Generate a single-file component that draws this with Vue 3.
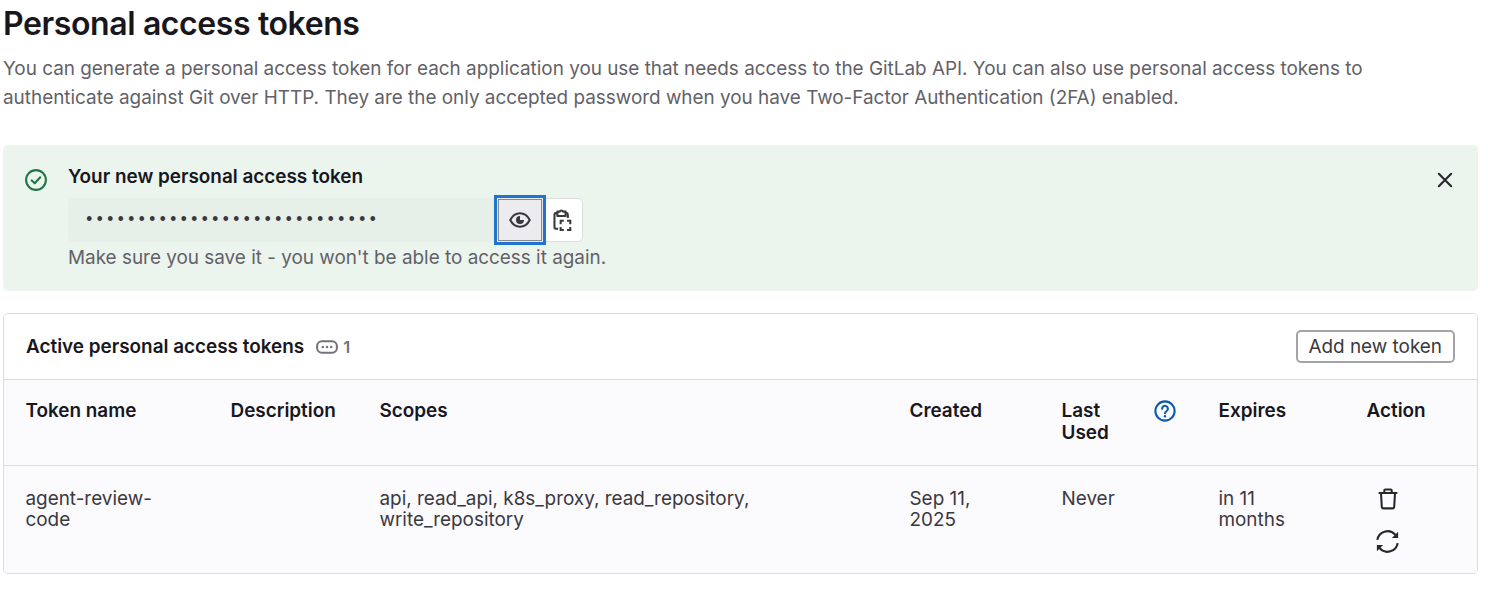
<script setup>
const columns = [
  { label: "Token name", width: 205 },
  { label: "Description", width: 149 },
  { label: "Scopes", width: 530 },
  { label: "Created", width: 152 },
  { label: "Last Used", width: 157, help: true },
  { label: "Expires", width: 148 },
  { label: "Action", width: 134 },
]

const token = {
  name: "agent-review-code",
  scopes: "api, read_api, k8s_proxy, read_repository, write_repository",
  created: "Sep 11, 2025",
  lastUsed: "Never",
  expires: "in 11 months",
}
</script>

<template>
  <div class="page">
    <h1>Personal access tokens</h1>
    <p class="intro">
      You can generate a personal access token for each application you use that needs access to the GitLab API. You can also use personal access tokens to authenticate against Git over HTTP. They are the only accepted password when you have Two-Factor Authentication (2FA) enabled.
    </p>

    <div class="alert">
      <svg class="alert-icon" viewBox="0 0 16 16" fill="none" stroke="#217645" stroke-width="1.500">
        <circle cx="8" cy="8" r="7.200" />
        <path d="M4.900 8.300l2.200 2.100 4-4.400" stroke-width="1.500" stroke-linecap="round" stroke-linejoin="round" />
      </svg>
      <div class="alert-body">
        <div class="alert-title">Your new personal access token</div>
        <div class="token-field">
          <div class="token-value">••••••••••••••••••••••••••••</div>
          <button class="eye-btn" type="button">
            <svg viewBox="0 0 16 16" width="22" height="22" fill="none" stroke="#3a383f" stroke-width="1.500">
              <path d="M.9 8C2.600 4.700 5.100 3.100 8 3.100s5.400 1.600 7.100 4.900c-1.700 3.300-4.200 4.900-7.100 4.900S2.600 11.300.9 8z" stroke-linejoin="round" />
              <path d="M8 5.100a2.900 2.900 0 1 0 2.900 2.900H8z" fill="#3a383f" stroke="none" />
            </svg>
          </button>
          <button class="copy-btn" type="button">
            <svg viewBox="0 0 16 16" width="22" height="22" fill="none" stroke="#3a383f" stroke-width="1.500">
              <path d="M3.900 3H2.800a1 1 0 0 0-1 1v9.400a1 1 0 0 0 1 1h1.700" stroke-linejoin="round" />
              <path d="M9.700 3h.8a1 1 0 0 1 1 1v2.500" />
              <path d="M3.900 1.900h1.700a1.500 1.500 0 0 1 2.600 0h1.700v3.200h-6z" stroke-linejoin="round" />
              <path d="M6.300 11V8.600h2.300M10.900 8.600h2.400V11M13.300 13v2.300h-2.400M8.600 15.300H6.300V13" />
            </svg>
          </button>
        </div>
        <div class="alert-help">Make sure you save it - you won't be able to access it again.</div>
      </div>
      <button class="close-btn" type="button" aria-label="Dismiss">
        <svg viewBox="0 0 16 16" width="22" height="22" fill="none" stroke="#28272d" stroke-width="1.500" stroke-linecap="round">
          <path d="M3.500 3.500l9 9M12.500 3.500l-9 9" />
        </svg>
      </button>
    </div>

    <div class="card">
      <div class="card-head">
        <div class="card-title">
          <strong>Active personal access tokens</strong>
          <svg class="count-icon" viewBox="0 0 16 16" width="22" height="22" fill="none" stroke="#737278" stroke-width="1.500">
            <rect x="0.800" y="3.800" width="14.400" height="8.400" rx="3.500" />
            <circle cx="5" cy="8" r="0.900" fill="#737278" stroke="none" />
            <circle cx="8" cy="8" r="0.900" fill="#737278" stroke="none" />
            <circle cx="11" cy="8" r="0.900" fill="#737278" stroke="none" />
          </svg>
          <span class="count">1</span>
        </div>
        <button class="add-btn" type="button">Add new token</button>
      </div>

      <table>
        <colgroup>
          <col v-for="col in columns" :key="col.label" :style="{ width: col.width + 'px' }" />
        </colgroup>
        <thead>
          <tr>
            <th v-for="col in columns" :key="col.label">
              <div class="th-inner">
                <span :class="{ narrow: col.help }">{{ col.label }}</span>
                <svg v-if="col.help" class="help" viewBox="0 0 16 16" width="22" height="22" fill="none" stroke="#0b5cad" stroke-width="1.500">
                  <circle cx="8" cy="8" r="7" />
                  <path d="M5.900 6.300a2.100 2.100 0 1 1 3.300 1.700c-.8.500-1.200.9-1.200 1.700" stroke-linecap="round" />
                  <circle cx="8" cy="11.800" r="0.900" fill="#0b5cad" stroke="none" />
                </svg>
              </div>
            </th>
          </tr>
        </thead>
        <tbody>
          <tr>
            <td>{{ token.name }}</td>
            <td></td>
            <td>{{ token.scopes }}</td>
            <td>{{ token.created }}</td>
            <td>{{ token.lastUsed }}</td>
            <td>{{ token.expires }}</td>
            <td>
              <div class="actions">
                <svg viewBox="0 0 16 16" width="22" height="22" fill="none" stroke="#28272d" stroke-width="1.500" stroke-linejoin="round">
                  <path d="M1.200 3.700h13.600M2.900 3.700l.6 10.200a1 1 0 0 0 1 .9h7a1 1 0 0 0 1-.9l.6-10.200" />
                  <path d="M5.300 3.700V1.900a.8.8 0 0 1 .8-.8h3.800a.8.8 0 0 1 .8.8v1.800" />
                </svg>
                <svg viewBox="0 0 16 16" width="25" height="25" fill="none" stroke="#28272d" stroke-width="1.400">
                  <path d="M1.500 7a6.600 6.600 0 0 1 11.400-3.400L14.300 5" />
                  <path d="M14.500 9a6.600 6.600 0 0 1-11.400 3.400L1.700 11" />
                  <path d="M14.800 1.700v4h-4z" fill="#28272d" stroke="none" />
                  <path d="M1.200 14.300v-4h4z" fill="#28272d" stroke="none" />
                </svg>
              </div>
            </td>
          </tr>
        </tbody>
      </table>
    </div>
  </div>
</template>

<style>
body {
  background: #fff;
}
</style>

<style scoped>
.page {
  padding: 0 10px 0 3px;
  font-family: Inter, "Noto Sans", sans-serif;
  font-size: 18.9px;
  color: #3a383f;
}

h1 {
  margin: 0;
  padding-top: 5px;
  font-size: 32px;
  line-height: 38px;
  font-weight: 600;
  letter-spacing: -0.4px;
  color: #18171d;
}

.intro {
  margin: 11px 0 0;
  line-height: 29px;
  color: #626168;
}

.alert {
  display: flex;
  margin-top: 33px;
  height: 146px;
  padding: 21px 22px 0 22px;
  background: #ecf4ee;
  border-radius: 5px;
  box-sizing: border-box;
}

.alert-icon {
  width: 22px;
  height: 22px;
  margin-top: 3px;
  flex: none;
}

.alert-body {
  margin-left: 21px;
  flex: 1;
}

.alert-title {
  font-weight: 600;
  line-height: 22px;
  color: #18171d;
}

.token-field {
  display: flex;
  margin-top: 10px;
  height: 44px;
}

.token-value {
  width: 429px;
  padding-left: 16px;
  box-sizing: border-box;
  background: #e6efe8;
  border-radius: 5px 0 0 5px;
  font-family: "Liberation Mono", monospace;
  font-size: 17.5px;
  line-height: 45px;
  color: #3a383f;
}

.eye-btn,
.copy-btn {
  display: flex;
  align-items: center;
  justify-content: center;
  padding: 0;
  box-sizing: border-box;
  height: 44px;
  cursor: pointer;
}

.eye-btn {
  width: 46px;
  background: #ececef;
  border: 1px solid #e6e6e9;
  box-shadow: inset 0 0 0 1px #89888d;
  outline: 3px solid #1f75cb;
  position: relative;
}

.copy-btn {
  width: 40px;
  background: #fff;
  border: 1px solid #dcdcde;
  border-left: none;
  border-radius: 0 5px 5px 0;
}

.alert-help {
  line-height: 22px;
  margin-top: 5px;
  color: #626168;
}

.close-btn {
  align-self: flex-start;
  display: flex;
  margin-top: 3px;
  padding: 0;
  background: none;
  border: none;
  cursor: pointer;
}

.card {
  margin-top: 22px;
  border: 1px solid #dcdcde;
  border-radius: 5px;
  overflow: hidden;
}

.card-head {
  display: flex;
  align-items: center;
  justify-content: space-between;
  height: 65px;
  padding: 0 22px;
  background: #fff;
  border-bottom: 1px solid #dcdcde;
}

.card-title {
  display: flex;
  align-items: center;
  color: #18171d;
}

.card-title strong {
  font-weight: 600;
}

.count-icon {
  margin-left: 12px;
}

.count {
  margin-left: 5px;
  font-size: 16.5px;
  font-weight: 600;
  color: #737278;
}

.add-btn {
  height: 33px;
  padding: 0 11px 0 10.5px;
  background: #fff;
  border: 2px solid #a4a3a8;
  border-radius: 5px;
  font: inherit;
  color: #3a383f;
  cursor: pointer;
}

table {
  width: 100%;
  table-layout: fixed;
  border-collapse: collapse;
  background: #fbfafd;
}

th {
  height: 85px;
  padding: 20px 22px 20px 21.5px;
  box-sizing: border-box;
  vertical-align: top;
  text-align: left;
  font-weight: 600;
  line-height: 22px;
  color: #18171d;
  border-bottom: 1px solid #dcdcde;
}

td {
  height: 108px;
  padding: 22px 22px 0 21.5px;
  box-sizing: border-box;
  vertical-align: top;
  line-height: 21px;
  color: #3a383f;
}

.th-inner {
  display: flex;
  justify-content: space-between;
  align-items: flex-start;
}

.narrow {
  width: 60px;
}

.help {
  flex: none;
  margin-right: -1px;
}

.actions {
  display: flex;
  flex-direction: column;
  align-items: center;
  width: 42px;
  gap: 19px;
}
</style>
